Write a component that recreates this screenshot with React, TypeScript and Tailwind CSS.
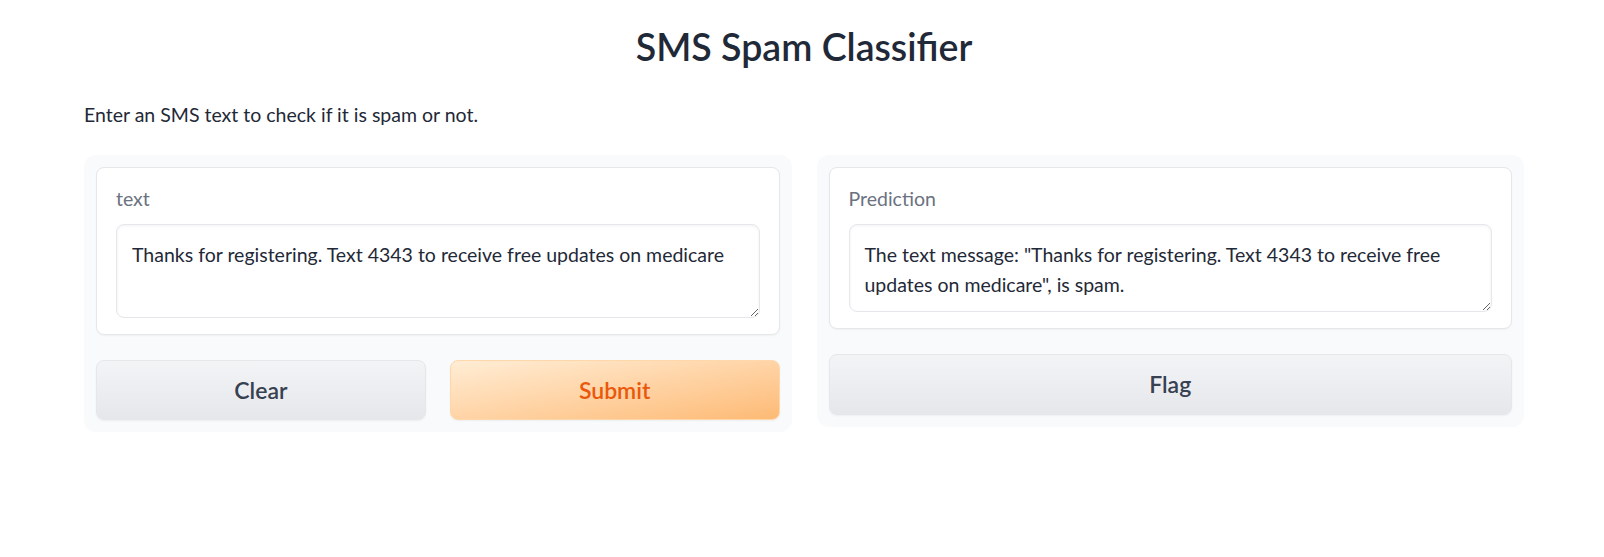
import React from 'react';

const font = { fontFamily: 'Lato, "Noto Sans", sans-serif' };

function Field({ label, value, h }: { label: string; value: string; h: string }) {
  return (
    <div className="rounded-lg border border-[#e5e7eb] bg-white px-[19px] pt-[18px] pb-[16px] shadow-[0_1px_2px_rgba(0,0,0,0.04)]">
      <div className="mb-[12px] text-[19.5px] leading-[26px] text-[#6b7280]">{label}</div>
      <textarea
        readOnly
        value={value}
        className={`block w-full resize-y rounded-lg border border-[#e5e7eb] bg-white px-[15px] py-[15px] text-[19.5px] leading-[30px] text-[#1f2937] shadow-[inset_0_1px_3px_rgba(0,0,0,0.06)] outline-none ${h}`}
        style={{ ...font }}
      />
    </div>
  );
}

export default function App() {
  return (
    <div className="min-h-[557px] bg-white pl-[84px] pr-[80px] pt-[27px]" style={font}>
      <h1 className="text-center text-[37.5px] font-semibold leading-[40px] text-[#1f2937]">SMS Spam Classifier</h1>
      <p className="mt-[35px] text-[19.5px] leading-[26px] text-[#1f2937]">Enter an SMS text to check if it is spam or not.</p>

      <div className="mt-[27px] flex items-start gap-[25px]">
        {/* inputs */}
        <div className="flex-1 rounded-xl bg-[#f9fafb] p-3">
          <Field label="text" value="Thanks for registering. Text 4343 to receive free updates on medicare" h="h-[94px]" />
          <div className="mt-[25px] grid grid-cols-2 gap-[24px]">
            <button className="h-[60px] rounded-lg border border-[#e5e7eb] bg-gradient-to-b from-[#f3f4f6] to-[#e5e7eb] text-[23px] font-semibold text-[#374151] shadow-[0_1px_2px_rgba(0,0,0,0.05)]">
              Clear
            </button>
            <button className="h-[60px] rounded-lg border border-[#fed7aa] bg-gradient-to-br from-[#ffedd5] to-[#fdba74] text-[23px] font-semibold text-[#ea580c] shadow-[0_1px_2px_rgba(0,0,0,0.05)]">
              Submit
            </button>
          </div>
        </div>

        {/* outputs */}
        <div className="flex-1 rounded-xl bg-[#f9fafb] p-3">
          <Field
            label="Prediction"
            value={'The text message: "Thanks for registering. Text 4343 to receive free updates on medicare", is spam.'}
            h="h-[88px]"
          />
          <button className="mt-[25px] h-[61px] w-full rounded-lg border border-[#e5e7eb] bg-gradient-to-b from-[#f3f4f6] to-[#e5e7eb] text-[23px] font-semibold text-[#374151] shadow-[0_1px_2px_rgba(0,0,0,0.05)]">
            Flag
          </button>
        </div>
      </div>
    </div>
  );
}
